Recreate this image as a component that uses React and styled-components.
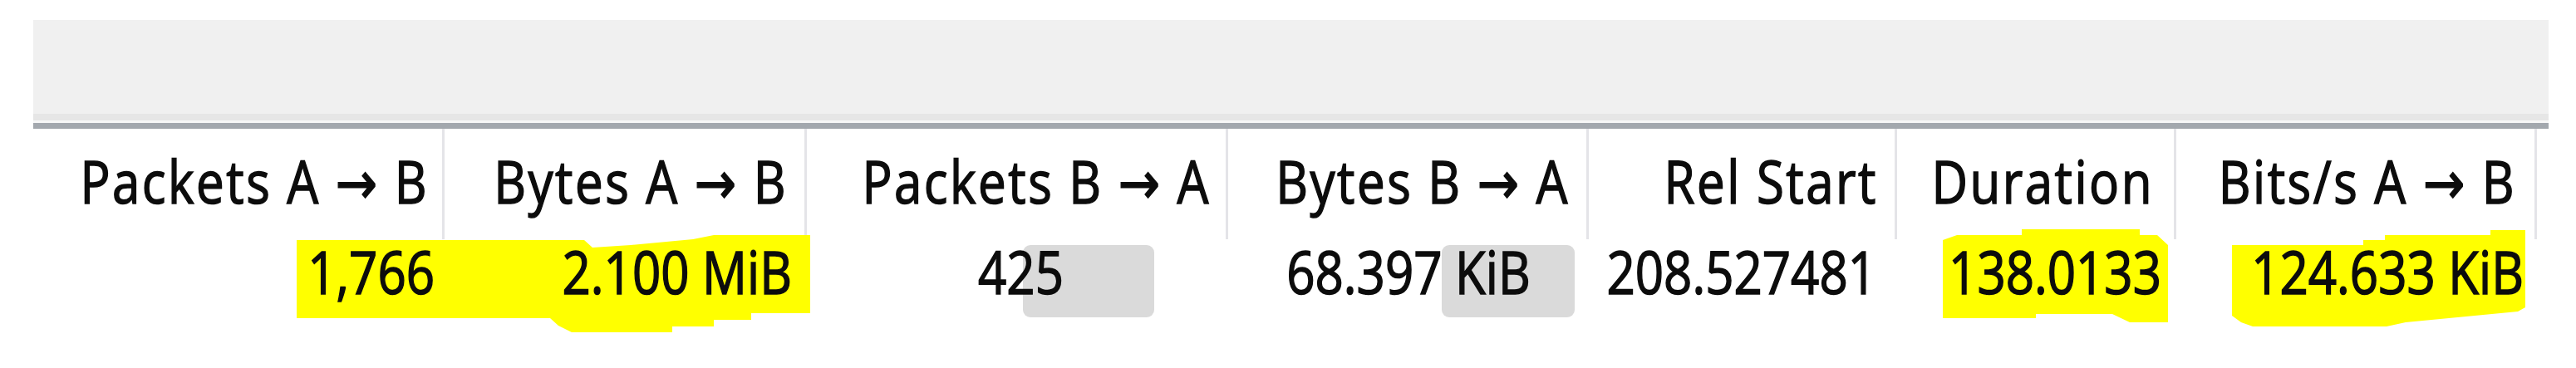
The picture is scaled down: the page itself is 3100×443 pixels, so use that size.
import React from "react";
import styled, { createGlobalStyle } from "styled-components";

const GlobalStyle = createGlobalStyle`
  html, body {
    margin: 0;
    padding: 0;
    background: #ffffff;
  }
  body {
    font-family: "Open Sans", "DejaVu Sans", sans-serif;
    color: #0c0c0c;
  }
`;

const COLS = [495, 436, 507, 434, 371, 336, 434];

const Page = styled.div`
  width: 3100px;
  height: 443px;
  box-sizing: border-box;
  padding: 24px 0 0 40px;
  overflow: hidden;
`;

const Panel = styled.div`
  width: 3027px;
`;

const Toolbar = styled.div`
  height: 113px;
  background: #f0f0f0;
  border-bottom: 8px solid #e6e6e6;
`;

const Rule = styled.div`
  height: 7px;
  border-top: 3px solid #f7f7f7;
  background: #a3a8ae;
`;

const Row = styled.div`
  position: relative;
  display: grid;
  grid-template-columns: ${COLS.map((w) => `${w}px`).join(" ")};
`;

const HeadCell = styled.div`
  box-sizing: border-box;
  height: 133px;
  padding: 36px ${(p) => p.$pad ?? 20}px 0 0;
  display: flex;
  justify-content: flex-end;
  border-right: 3px solid #e4e4e8;
`;

const DataCell = styled.div`
  position: relative;
  z-index: 1;
  box-sizing: border-box;
  height: 122px;
  padding: 13px ${(p) => p.$pad ?? 18}px 0 0;
  display: flex;
  justify-content: ${(p) => (p.$center ? "center" : "flex-end")};
  ${(p) => p.$center && `padding-right: 0; padding-left: ${p.$shift ?? 0}px;`}
`;

const Txt = styled.span`
  display: inline-block;
  font-size: 60px;
  line-height: 60px;
  letter-spacing: ${(p) => p.$track ?? 0}px;
  white-space: nowrap;
  -webkit-text-stroke: 1.3px #0c0c0c;
  transform: scaleY(1.19);
`;

const Marks = styled.svg`
  position: absolute;
  left: 0;
  top: 0;
  z-index: 0;
  overflow: visible;
`;

const HEADERS = [
  { text: "Packets A → B", pad: 16 },
  { text: "Bytes A → B", pad: 20 },
  { text: "Packets B → A", pad: 18 },
  { text: "Bytes B → A", pad: 20 },
  { text: "Rel Start", pad: 20 },
  { text: "Duration", pad: 24 },
  { text: "Bits/s A → B", pad: 22 },
];

const CELLS = [
  { text: "1,766", pad: 12 },
  { text: "2.100 MiB", pad: 18 },
  { text: "425", center: true, shift: 8 },
  { text: "68.397 KiB", center: true, shift: 0 },
  { text: "208.527481", pad: 25 },
  { text: "138.0133", pad: 18 },
  { text: "124.633 KiB", pad: 16 },
];

// marker strokes and grey selection boxes, in row coordinates
const YELLOW = [
  "317,1 663,1 673,10 719,7 794,0 819,-5 935,-5 935,89 864,89 864,97 819,97 819,105 769,105 769,112 648,112 632,104 622,95 317,95",
  "2298,1 2315,-5 2393,-5 2393,-12 2535,-12 2535,-5 2556,-5 2569,7 2569,100 2523,100 2502,90 2410,90 2410,95 2298,95",
  "2646,7 2804,7 2804,1 2830,1 2830,-5 2957,-5 2957,-11 2999,-11 2999,82 2990,87 2855,100 2832,105 2671,105 2657,100 2646,92",
];

const GREY = [
  { x: 1191, w: 158 },
  { x: 1695, w: 160 },
];

export default function App() {
  return (
    <Page>
      <GlobalStyle />
      <Panel>
        <Toolbar />
        <Rule />
        <Row>
          {HEADERS.map((h) => (
            <HeadCell key={h.text} $pad={h.pad}>
              <Txt $track={2.5}>{h.text}</Txt>
            </HeadCell>
          ))}
        </Row>
        <Row>
          <Marks width="3013" height="122">
            {YELLOW.map((pts, i) => (
              <polygon key={i} points={pts} fill="#ffff00" />
            ))}
            {GREY.map((g) => (
              <rect key={g.x} x={g.x} y="7" width={g.w} height="87" rx="9" fill="#dadada" />
            ))}
          </Marks>
          {CELLS.map((c) => (
            <DataCell key={c.text} $pad={c.pad} $center={c.center} $shift={c.shift}>
              <Txt>{c.text}</Txt>
            </DataCell>
          ))}
        </Row>
      </Panel>
    </Page>
  );
}
